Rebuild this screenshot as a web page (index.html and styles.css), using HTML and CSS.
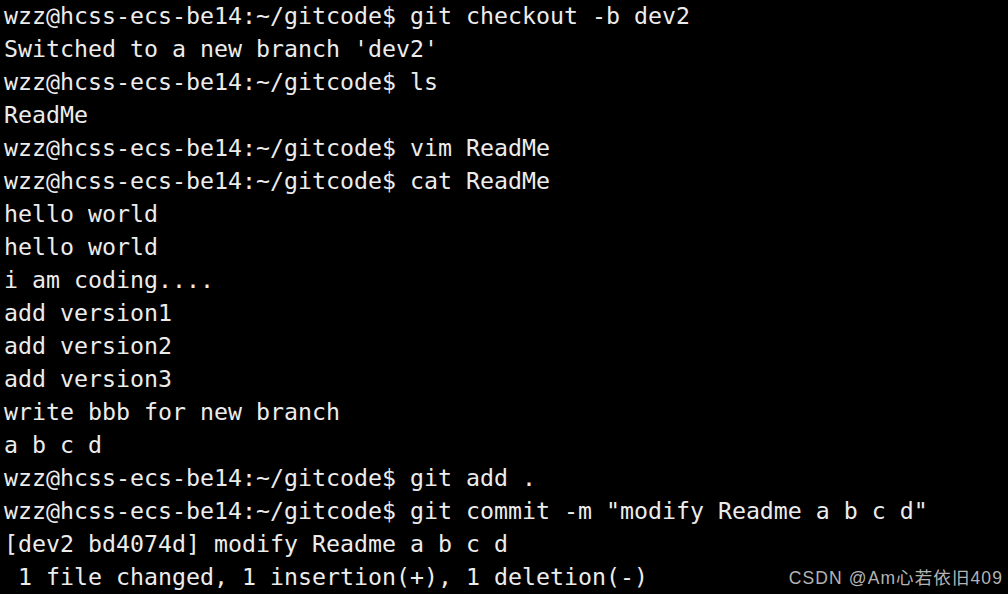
FILE: index.html
```html
<!DOCTYPE html>
<html>
<head>
<meta charset="utf-8">
<link rel="stylesheet" href="styles.css">
</head>
<body>
<div class="term">
<div class="line">wzz@hcss-ecs-be14:~/gitcode$ git checkout -b dev2</div>
<div class="line">Switched to a new branch 'dev2'</div>
<div class="line">wzz@hcss-ecs-be14:~/gitcode$ ls</div>
<div class="line">ReadMe</div>
<div class="line">wzz@hcss-ecs-be14:~/gitcode$ vim ReadMe</div>
<div class="line">wzz@hcss-ecs-be14:~/gitcode$ cat ReadMe</div>
<div class="line">hello world</div>
<div class="line">hello world</div>
<div class="line">i am coding....</div>
<div class="line">add version1</div>
<div class="line">add version2</div>
<div class="line">add version3</div>
<div class="line">write bbb for new branch</div>
<div class="line">a b c d</div>
<div class="line">wzz@hcss-ecs-be14:~/gitcode$ git add .</div>
<div class="line">wzz@hcss-ecs-be14:~/gitcode$ git commit -m "modify Readme a b c d"</div>
<div class="line">[dev2 bd4074d] modify Readme a b c d</div>
<div class="line"> 1 file changed, 1 insertion(+), 1 deletion(-)</div>
</div>
<div class="watermark">CSDN @Am心若依旧409</div>
</body>
</html>
```
FILE: styles.css
```css
html, body {
  margin: 0;
  padding: 0;
  background: #000;
  width: 1008px;
  height: 594px;
  overflow: hidden;
}
body {
  position: relative;
}
.term {
  margin-top: -1px;
  padding-left: 4px;
  font-family: "DejaVu Sans Mono", "Liberation Mono", monospace;
  font-size: 23.26px;
  color: #ececec;
}
.line {
  height: 33px;
  line-height: 33px;
  white-space: pre;
}
.watermark {
  position: absolute;
  right: 5px;
  bottom: 5px;
  font-family: "Liberation Sans", "Noto Sans CJK SC", sans-serif;
  font-size: 17.5px;
  letter-spacing: 1.1px;
  color: #b4b4b4;
  white-space: nowrap;
}
```
